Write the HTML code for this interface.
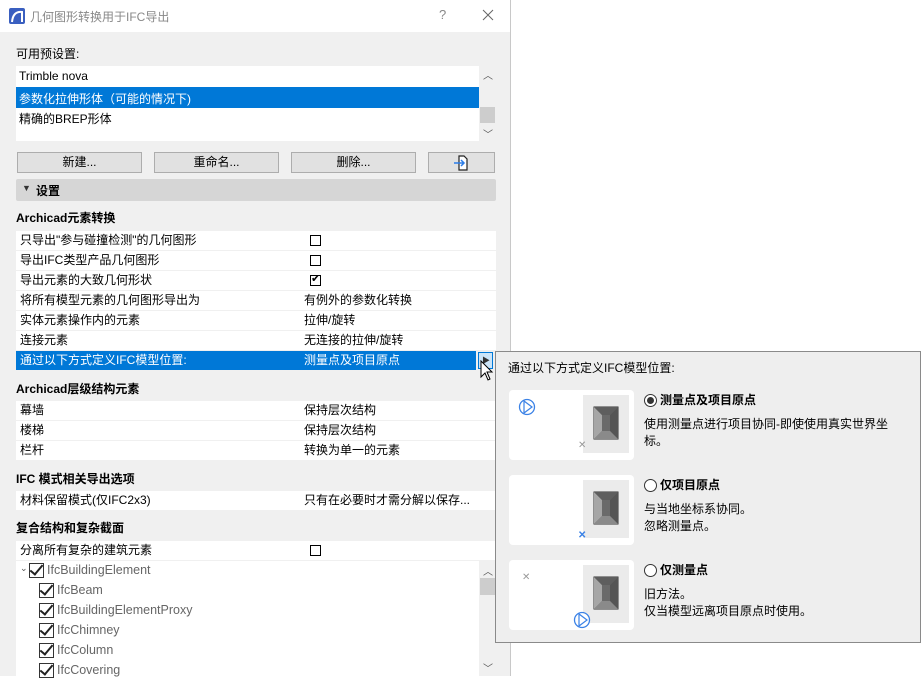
<!DOCTYPE html>
<html><head><meta charset="utf-8"><style>
*{margin:0;padding:0;box-sizing:border-box}
body{width:921px;height:676px;background:#fff;position:relative;overflow:hidden;font-family:"Liberation Sans","Noto Sans CJK SC",sans-serif;font-size:12px;color:#000}
.a{position:absolute;white-space:nowrap}
#dlg{position:absolute;left:0;top:0;width:511px;height:676px;background:#f0f0f0;border-right:1px solid #c8c8c8}
#title{position:absolute;left:0;top:0;width:510px;height:32px;background:#fff}
.row{position:absolute;left:16px;width:480px;height:19px;background:#fff;line-height:19px}
.row span{position:absolute;left:4px}
.row .v{left:288px}
.h{font-weight:bold;font-size:12px}
.btn{position:absolute;top:152px;height:21px;background:#e1e1e1;border:1px solid #adadad;text-align:center;line-height:19px}
.cb{position:absolute;width:11px;height:11px;border:1px solid #000;background:#fff}
.ck{position:absolute;width:15px;height:15px;border:1.5px solid #333;background:#fff}
.ck:after{content:"";position:absolute;left:3px;top:-2px;width:5px;height:11px;border-right:2px solid #222;border-bottom:2px solid #222;transform:rotate(40deg)}
.it{color:#666;font-size:12.5px}
#pop{position:absolute;left:495px;top:351px;width:426px;height:292px;background:#eeeeee;border:1px solid #8a8a8a}
.card{position:absolute;left:13px;width:125px;height:70px;background:#fff;border-radius:4px}
.card .g{position:absolute;left:74px;top:5px;width:46px;height:58px;background:#ebebeb}
.rad{position:absolute;width:13px;height:13px;border:1px solid #333;border-radius:50%;background:#fff}
.t{position:absolute;font-size:12px;line-height:17px}
</style></head><body>
<div id="dlg">
 <div id="title">
  <svg class="a" style="left:9px;top:8px" width="16" height="16"><rect x="0" y="0" width="16" height="16" rx="2" fill="#3a5fc0"/><path d="M3 14 Q4 3 13 4 L13 14" fill="none" stroke="#fff" stroke-width="2"/></svg>
  <div class="a" style="left:30px;top:8px;color:#888;font-size:12px">几何图形转换用于IFC导出</div>
  <div class="a" style="left:439px;top:7px;color:#888;font-size:13px">?</div>
  <svg class="a" style="left:482px;top:9px" width="12" height="12"><path d="M1 1 L11 11 M11 1 L1 11" stroke="#666" stroke-width="1"/></svg>
 </div>
 <div class="a" style="left:16px;top:45px">可用预设置:</div>
 <div class="a" style="left:16px;top:66px;width:463px;height:75px;background:#fff"></div>
 <div class="a" style="left:480px;top:66px;width:16px;height:75px;background:#f0f0f0"></div>
 <div class="a" style="left:480px;top:107px;width:15px;height:16px;background:#cdcdcd"></div>
 <div class="a" style="left:483px;top:67px;font-size:10px;color:#555">︿</div>
 <div class="a" style="left:483px;top:126px;font-size:10px;color:#555">﹀</div>
 <div class="a" style="left:19px;top:69px">Trimble nova</div>
 <div class="a" style="left:16px;top:87px;width:463px;height:21px;background:#0078d7"></div>
 <div class="a" style="left:19px;top:90px;color:#fff">参数化拉伸形体（可能的情况下)</div>
 <div class="a" style="left:19px;top:110px">精确的BREP形体</div>
 <div class="btn" style="left:17px;width:125px">新建...</div>
 <div class="btn" style="left:154px;width:125px">重命名...</div>
 <div class="btn" style="left:291px;width:125px">删除...</div>
 <div class="btn" style="left:428px;width:67px"><svg width="20" height="18" style="margin-top:1px"><path d="M7 2 H12 L15 5 V16 H7 Z" fill="#fff" stroke="#222" stroke-width="1.2"/><path d="M2 9 H12 M9 6 L12 9 L9 12" fill="none" stroke="#2b7de9" stroke-width="1.5"/></svg></div>
 <div class="a" style="left:16px;top:179px;width:480px;height:22px;background:#d6d6d6;border-radius:2px"></div>
 <div class="a" style="left:22px;top:183px;font-size:9px;color:#333">▼</div>
 <div class="a h" style="left:36px;top:182px">设置</div>

 <div class="a h" style="left:16px;top:209px">Archicad元素转换</div>
 <div class="row" style="top:231px"><span>只导出"参与碰撞检测"的几何图形</span></div><div class="cb" style="left:310px;top:235px"></div>
 <div class="row" style="top:251px"><span>导出IFC类型产品几何图形</span></div><div class="cb" style="left:310px;top:255px"></div>
 <div class="row" style="top:271px"><span>导出元素的大致几何形状</span></div><div class="cb" style="left:310px;top:275px"></div><div class="a" style="left:311px;top:272px;font-size:11px">✔</div>
 <div class="row" style="top:291px"><span>将所有模型元素的几何图形导出为</span><span class="v">有例外的参数化转换</span></div>
 <div class="row" style="top:311px"><span>实体元素操作内的元素</span><span class="v">拉伸/旋转</span></div>
 <div class="row" style="top:331px"><span>连接元素</span><span class="v">无连接的拉伸/旋转</span></div>
 <div class="row" style="top:351px;width:460px;background:#0078d7;color:#fff"><span>通过以下方式定义IFC模型位置:</span><span class="v">测量点及项目原点</span></div>
 <div class="a" style="left:478px;top:352px;width:15px;height:17px;background:#cce4f7;border:1px solid #0078d7"></div>
 <div class="a" style="left:482px;top:355px;font-size:8px;color:#333">▶</div>
 <svg class="a" style="left:480px;top:360px" width="14" height="22"><path d="M1 1 V17 L5 13 L8 20 L10 19 L7 12 L12 12 Z" fill="#fff" stroke="#000"/></svg>

 <div class="a h" style="left:16px;top:380px">Archicad层级结构元素</div>
 <div class="row" style="top:401px"><span>幕墙</span><span class="v">保持层次结构</span></div>
 <div class="row" style="top:421px"><span>楼梯</span><span class="v">保持层次结构</span></div>
 <div class="row" style="top:441px"><span>栏杆</span><span class="v">转换为单一的元素</span></div>
 <div class="a h" style="left:16px;top:470px">IFC 模式相关导出选项</div>
 <div class="row" style="top:491px"><span>材料保留模式(仅IFC2x3)</span><span class="v">只有在必要时才需分解以保存...</span></div>
 <div class="a h" style="left:16px;top:519px">复合结构和复杂截面</div>
 <div class="row" style="top:541px"><span>分离所有复杂的建筑元素</span></div><div class="cb" style="left:310px;top:545px"></div>
 <div class="a" style="left:16px;top:561px;width:463px;height:115px;background:#fff"></div>
 <div class="a" style="left:480px;top:578px;width:15px;height:17px;background:#cdcdcd"></div>
 <div class="a" style="left:483px;top:563px;font-size:10px;color:#555">︿</div>
 <div class="a" style="left:483px;top:660px;font-size:10px;color:#555">﹀</div>
 <div class="a" style="left:20px;top:563px;font-size:9px;color:#555">⌄</div>
 <div class="ck" style="left:29px;top:563px"></div><div class="a it" style="left:47px;top:563px">IfcBuildingElement</div>
 <div class="ck" style="left:39px;top:583px"></div><div class="a it" style="left:57px;top:583px">IfcBeam</div>
 <div class="ck" style="left:39px;top:603px"></div><div class="a it" style="left:57px;top:603px">IfcBuildingElementProxy</div>
 <div class="ck" style="left:39px;top:623px"></div><div class="a it" style="left:57px;top:623px">IfcChimney</div>
 <div class="ck" style="left:39px;top:643px"></div><div class="a it" style="left:57px;top:643px">IfcColumn</div>
 <div class="ck" style="left:39px;top:663px"></div><div class="a it" style="left:57px;top:663px">IfcCovering</div>
</div>

<div id="pop">
 <div class="t" style="left:12px;top:8px">通过以下方式定义IFC模型位置:</div>
 <div class="card" style="top:38px"><div class="g"></div>
  <svg class="a" style="left:74px;top:5px" width="46" height="58"><g transform="translate(11,12)"><rect width="24" height="32" fill="#6a6a6a" stroke="#333"/><path d="M0 0 L8 8 V24 L0 32 Z" fill="#a6a6a6"/><path d="M24 0 L16 8 V24 L24 32 Z" fill="#555"/><path d="M8 24 H16 L24 32 H0 Z" fill="#8a8a8a"/><path d="M0 0 H24 L16 8 H8Z" fill="#5e5e5e"/></g></svg>
  <svg class="a" style="left:9px;top:8px" width="18" height="18"><circle cx="9" cy="9" r="7.5" fill="none" stroke="#3b82e6" stroke-width="1.3"/><path d="M6 3 V15 L14 9 Z" fill="none" stroke="#3b82e6" stroke-width="1.2"/></svg>
  <div class="a" style="left:69px;top:50px;color:#999;font-size:10px">✕</div>
 </div>
 <div class="rad" style="left:148px;top:42px"><div style="position:absolute;left:2px;top:2px;width:7px;height:7px;border-radius:50%;background:#333"></div></div>
 <div class="t h" style="left:164px;top:40px">测量点及项目原点</div>
 <div class="t" style="left:148px;top:64px">使用测量点进行项目协同-即使使用真实世界坐<br>标。</div>

 <div class="card" style="top:123px"><div class="g"></div>
  <svg class="a" style="left:74px;top:5px" width="46" height="58"><g transform="translate(11,12)"><rect width="24" height="32" fill="#6a6a6a" stroke="#333"/><path d="M0 0 L8 8 V24 L0 32 Z" fill="#a6a6a6"/><path d="M24 0 L16 8 V24 L24 32 Z" fill="#555"/><path d="M8 24 H16 L24 32 H0 Z" fill="#8a8a8a"/><path d="M0 0 H24 L16 8 H8Z" fill="#5e5e5e"/></g></svg>
  <div class="a" style="left:69px;top:55px;color:#3b82e6;font-size:10px;font-weight:bold">✕</div>
 </div>
 <div class="rad" style="left:148px;top:127px"></div>
 <div class="t h" style="left:164px;top:125px">仅项目原点</div>
 <div class="t" style="left:148px;top:149px">与当地坐标系协同。<br>忽略测量点。</div>

 <div class="card" style="top:208px"><div class="g"></div>
  <svg class="a" style="left:74px;top:5px" width="46" height="58"><g transform="translate(11,12)"><rect width="24" height="32" fill="#6a6a6a" stroke="#333"/><path d="M0 0 L8 8 V24 L0 32 Z" fill="#a6a6a6"/><path d="M24 0 L16 8 V24 L24 32 Z" fill="#555"/><path d="M8 24 H16 L24 32 H0 Z" fill="#8a8a8a"/><path d="M0 0 H24 L16 8 H8Z" fill="#5e5e5e"/></g></svg>
  <div class="a" style="left:13px;top:12px;color:#999;font-size:10px">✕</div>
  <svg class="a" style="left:64px;top:51px" width="18" height="18"><circle cx="9" cy="9" r="7.5" fill="#fff" stroke="#3b82e6" stroke-width="1.3"/><path d="M6 3 V15 L14 9 Z" fill="none" stroke="#3b82e6" stroke-width="1.2"/></svg>
 </div>
 <div class="rad" style="left:148px;top:212px"></div>
 <div class="t h" style="left:164px;top:210px">仅测量点</div>
 <div class="t" style="left:148px;top:234px">旧方法。<br>仅当模型远离项目原点时使用。</div>
</div>
</body></html>
